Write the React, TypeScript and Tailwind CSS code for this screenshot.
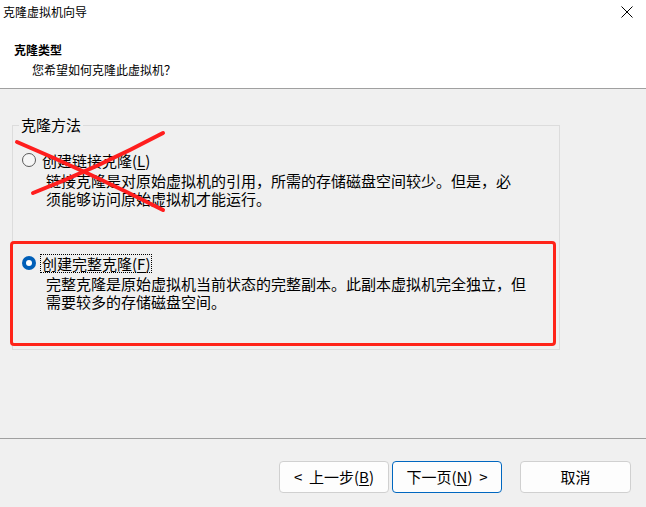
const font = "font-['Noto_Sans_CJK_SC','Noto_Sans',sans-serif]";

const Radio = ({ checked }: { checked: boolean }) =>
  checked ? (
    <span className="w-[14px] h-[14px] rounded-full bg-[#005fb8] flex items-center justify-center shrink-0">
      <span className="w-[6px] h-[6px] rounded-full bg-white" />
    </span>
  ) : (
    <span className="w-[14px] h-[14px] rounded-full border border-[#5a5a5a] bg-[#f6f6f6] shrink-0" />
  );

const Option = ({
  checked,
  label,
  mnemonic,
  lines,
  className,
}: {
  checked: boolean;
  label: string;
  mnemonic: string;
  lines: string[];
  className?: string;
}) => {
  return (
    <div className={className}>
      <div className="flex items-center pl-[9px] h-[18px]">
        <Radio checked={checked} />
        <span
          className={`ml-[4px] px-[1px] leading-[17px] border border-dotted ${
            checked ? "border-black" : "border-transparent"
          }`}
        >
          {label}(<span className="underline underline-offset-2">{mnemonic}</span>)
        </span>
      </div>
      <p className="pl-[33px] mt-[3px] leading-[18px] whitespace-nowrap">
        {lines[0]}
        <br />
        {lines[1]}
      </p>
    </div>
  );
};

const Button = ({
  children,
  primary,
}: {
  children: React.ReactNode;
  primary?: boolean;
}) => (
  <button
    className={`w-full h-[32px] rounded-[4px] bg-[#fdfdfd] text-[15px] text-black flex items-center justify-center border ${
      primary ? "border-[#0067c0]" : "border-[#d0d0d0]"
    }`}
  >
    {children}
  </button>
);

export default function App() {
  return (
    <div
      className={`relative w-[646px] h-[507px] bg-[#f0f0f0] flex flex-col overflow-hidden text-black ${font}`}
    >
      {/* header */}
      <div className="h-[89px] bg-white border-b border-[#a0a0a0] flex flex-col">
        <div className="h-[24px] flex items-center justify-between pl-[3px] pr-[13px]">
          <span className="text-[12px]">克隆虚拟机向导</span>
          <svg width="12" height="12" viewBox="0 0 12 12">
            <path d="M0.5 0.5 L11.5 11.5 M11.5 0.5 L0.5 11.5" stroke="#000" strokeWidth="1" />
          </svg>
        </div>
        <div className="mt-[16px] text-[12px] leading-[20px]">
          <div className="pl-[14px] font-bold">克隆类型</div>
          <div className="pl-[32px]">您希望如何克隆此虚拟机？</div>
        </div>
      </div>

      {/* body */}
      <fieldset className="mt-[27px] ml-[12px] w-[548px] h-[234px] border border-[#dcdcdc] text-[15px]">
        <legend className="ml-[6px] px-[2px] leading-[18px]">克隆方法</legend>
        <Option
          className="mt-[17px]"
          checked={false}
          label="创建链接克隆"
          mnemonic="L"
          lines={[
            "链接克隆是对原始虚拟机的引用，所需的存储磁盘空间较少。但是，必",
            "须能够访问原始虚拟机才能运行。",
          ]}
        />
        <Option
          className="mt-[46px]"
          checked
          label="创建完整克隆"
          mnemonic="F"
          lines={[
            "完整克隆是原始虚拟机当前状态的完整副本。此副本虚拟机完全独立，但",
            "需要较多的存储磁盘空间。",
          ]}
        />
      </fieldset>

      <div className="flex-1" />
      <div className="border-t border-[#a0a0a0]" />

      {/* footer */}
      <div className="h-[68px] pt-[22px] pr-[15px] flex justify-end">
        <div className="grid grid-cols-[110px_110px] gap-[3px]">
          <Button>
            &lt;&nbsp; 上一步(<span className="underline underline-offset-2">B</span>)
          </Button>
          <Button primary>
            下一页(<span className="underline underline-offset-2">N</span>)&nbsp; &gt;
          </Button>
        </div>
        <div className="ml-[18px] w-[111px]">
          <Button>取消</Button>
        </div>
      </div>

      {/* red annotations */}
      <div className="absolute left-[10px] top-[241px] w-[546px] h-[105px] border-[3px] border-[#ff2419] rounded-[4px] pointer-events-none" />
      <svg
        className="absolute left-0 top-0 pointer-events-none"
        width="646"
        height="507"
        viewBox="0 0 646 507"
      >
        <g stroke="#ff1e1e" strokeWidth="4" strokeLinecap="round" fill="none">
          <path d="M17 142 Q 90 173 163 210" />
          <path d="M163 133 Q 97 168 33 193" />
        </g>
      </svg>
    </div>
  );
}
